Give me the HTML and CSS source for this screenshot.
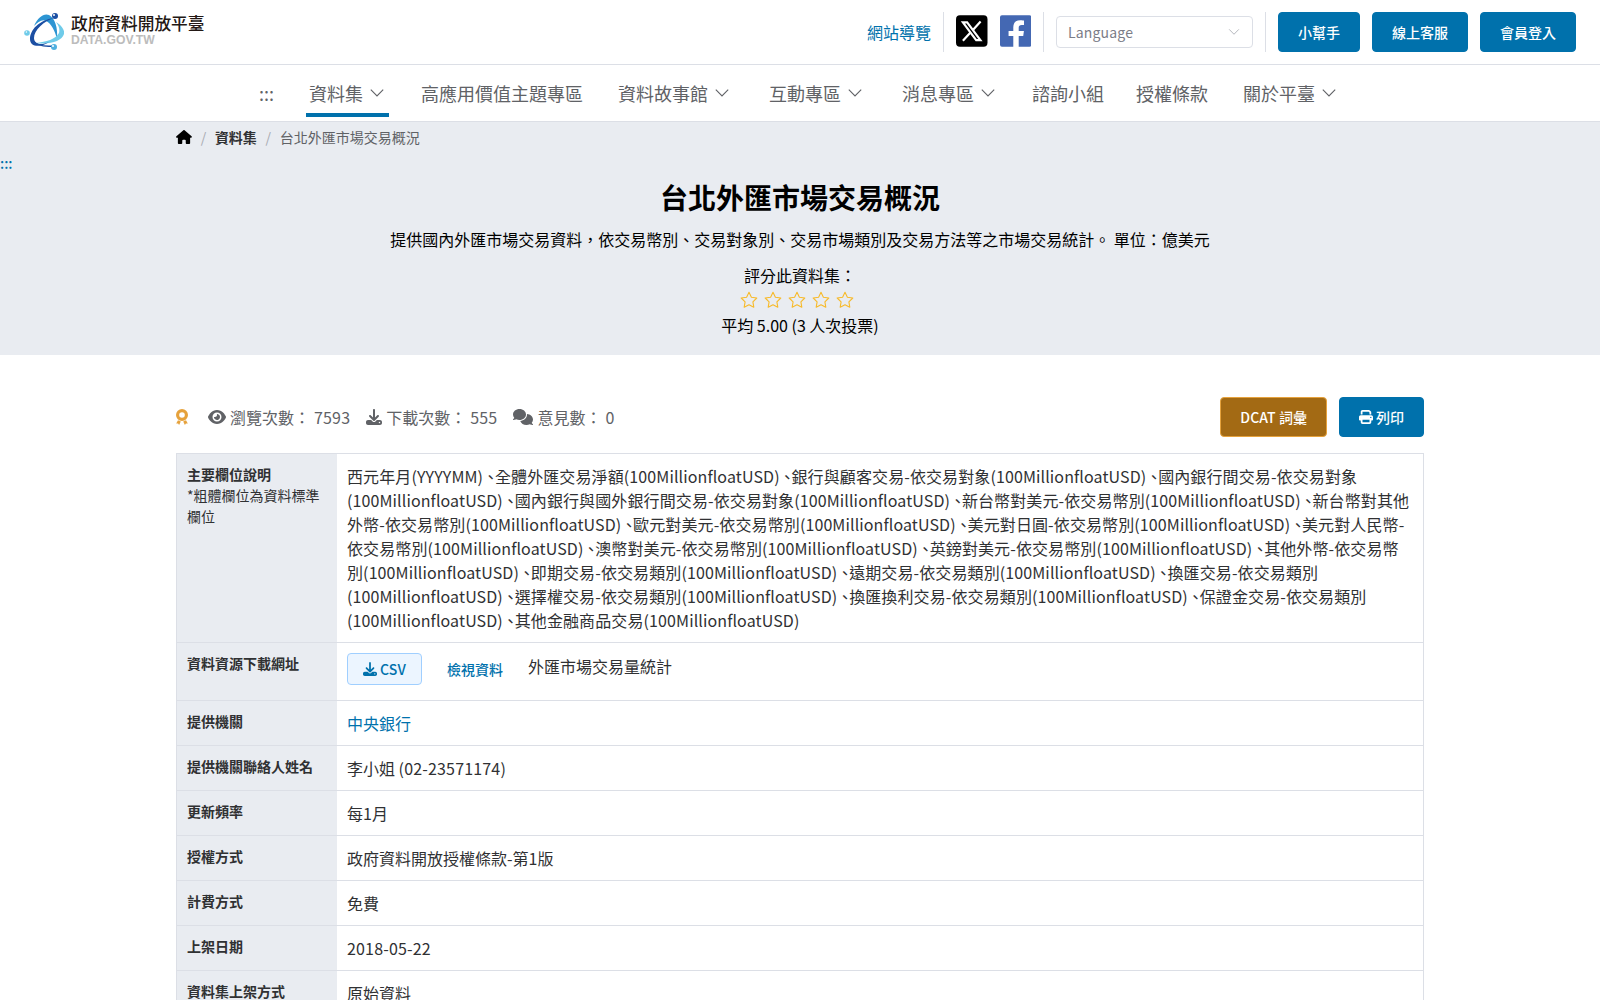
FILE: index.html
```html
<!DOCTYPE html>
<html lang="zh-Hant">
<head>
    <meta charset="UTF-8">
    <meta name="viewport" content="width=device-width, initial-scale=1.0">
    <title>台北外匯市場交易概況 | 政府資料開放平臺</title>
    <link rel="stylesheet" href="styles.css">
</head>
<body>
    <!-- shared icons -->
    <svg class="icon-defs" width="0" height="0">
        <symbol id="icon-down" viewBox="0 0 18 18"><path d="M2.8 5.6 9 11.900l6.200-6.300" fill="none" stroke="currentColor" stroke-width="1.1"/></symbol>
        <symbol id="icon-star" viewBox="0 0 18 18"><path d="M9 1.300l2.400 4.900 5.400.8-3.900 3.800.9 5.400L9 13.700l-4.800 2.500.9-5.400L1.200 7l5.400-.8z" fill="none" stroke="currentColor" stroke-width="1.1" stroke-linejoin="round"/></symbol>
        <symbol id="icon-download" viewBox="0 0 512 512"><path d="M288 32c0-17.700-14.300-32-32-32s-32 14.300-32 32V274.700l-73.400-73.400c-12.500-12.500-32.800-12.500-45.300 0s-12.500 32.800 0 45.300l128 128c12.500 12.500 32.800 12.500 45.300 0l128-128c12.500-12.500 12.500-32.800 0-45.300s-32.800-12.500-45.300 0L288 274.700V32zM64 352c-35.300 0-64 28.700-64 64v32c0 35.300 28.700 64 64 64H448c35.300 0 64-28.700 64-64V416c0-35.300-28.700-64-64-64H346.500l-45.300 45.300c-25 25-65.500 25-90.500 0L165.500 352H64zm368 56a24 24 0 1 1 0 48 24 24 0 1 1 0-48z"/></symbol>
    </svg>

    <header class="header">
        <a class="logo" href="#">
            <svg class="logo-mark" viewBox="0 0 40 38">
                <path d="M10 13C14 4 20 0 25 2c6 3 9 13 8 24-2-8-6-16-11-18-4-2-8 1-12 5z" fill="#2d95d3"/>
                <path d="M32 9c5 3 9 8 8 12-2 7-14 11-28 9 10-1 20-4 23-10 1-4 0-7-3-11z" fill="#6fcbe9"/>
                <path d="M30 5C20 8 10 17 10 25c0 6 7 8 15 4-9 6-19 5-19-3C6 17 15 7 30 5z" fill="#1c4fa3"/>
                <path d="M7 25c2 6 11 9 22 8" fill="none" stroke="#1c4fa3" stroke-width="1.500"/>
                <circle cx="31" cy="3" r="3" fill="#1c4fa3"/>
                <circle cx="3" cy="20" r="2.800" fill="#6fcbe9"/>
                <circle cx="30" cy="34" r="3" fill="#4fb0e0"/>
                <circle cx="30" cy="2" r="1" fill="#fff"/>
                <circle cx="2.400" cy="19" r=".8" fill="#fff"/>
                <circle cx="29" cy="33" r="1" fill="#fff"/>
            </svg>
            <span class="logo-text">
                <span class="logo-name">政府資料開放平臺</span>
                <span class="logo-domain">DATA.GOV.TW</span>
            </span>
        </a>
        <div class="tools">
            <a class="sitemap" href="#">網站導覽</a>
            <div class="socials">
                <a href="#"><svg class="social-icon" viewBox="0 0 32 32"><rect width="32" height="32" rx="4" fill="#000"/><path d="M7 7.200h4.300l13.500 18h-4.300z" fill="none" stroke="#fff" stroke-width="2.200"/><path d="M25 6.300l-7.600 8.500M14.700 17.600 7 26" fill="none" stroke="#fff" stroke-width="2.200"/></svg></a>
                <a href="#"><svg class="social-icon" viewBox="0 0 32 32"><path d="M2 0h28a2 2 0 0 1 2 2v28a2 2 0 0 1-2 2H19V21h4.600l.7-5H19v-3.500c0-1.800 1-2.700 3-2.700h2.400V5.400S22.700 5 20.500 5c-4.700 0-7 2.700-7 7.300V16H8.700v5h4.800v11H2a2 2 0 0 1-2-2V2a2 2 0 0 1 2-2z" fill="#4468b3"/></svg></a>
            </div>
            <div class="language">
                <span class="en">Language</span>
                <svg class="language-arrow"><use href="#icon-down"/></svg>
            </div>
            <div class="buttons">
                <button class="btn">小幫手</button>
                <button class="btn">線上客服</button>
                <button class="btn">會員登入</button>
            </div>
        </div>
    </header>

    <nav class="nav">
        <a class="nav-item" href="#">:::</a>
        <a class="nav-item submenu active" href="#">資料集<svg class="arrow"><use href="#icon-down"/></svg></a>
        <a class="nav-item" href="#">高應用價值主題專區</a>
        <a class="nav-item submenu" href="#">資料故事館<svg class="arrow"><use href="#icon-down"/></svg></a>
        <a class="nav-item submenu" href="#">互動專區<svg class="arrow"><use href="#icon-down"/></svg></a>
        <a class="nav-item submenu" href="#">消息專區<svg class="arrow"><use href="#icon-down"/></svg></a>
        <a class="nav-item" href="#">諮詢小組</a>
        <a class="nav-item" href="#">授權條款</a>
        <a class="nav-item submenu" href="#">關於平臺<svg class="arrow"><use href="#icon-down"/></svg></a>
    </nav>

    <section class="hero">
        <div class="container breadcrumb">
            <svg class="home" viewBox="0 0 576 512"><path d="M575.800 255.500c0 18-15 32.100-32 32.100h-32l.7 160.200c0 2.700-.2 5.400-.5 8.100V472c0 22.100-17.900 40-40 40H392c-22.100 0-40-17.900-40-40V384c0-17.700-14.300-32-32-32H256c-17.700 0-32 14.300-32 32v88c0 22.100-17.900 40-40 40H104c-22.100 0-40-17.900-40-40V287.600H32c-18 0-32-14-32-32.100 0-9 3-17 10-24L266.400 8c7-7 15-8 22-8s15 2 21 7L564.800 231.500c8 7 12 15 11 24z"/></svg>
            <span class="separator">/</span>
            <a class="crumb-link" href="#">資料集</a>
            <span class="separator">/</span>
            <span>台北外匯市場交易概況</span>
        </div>
        <a class="anchor" href="#">:::</a>
        <h1 class="title">台北外匯市場交易概況</h1>
        <p class="description">提供國內外匯市場交易資料，依交易幣別、交易對象別、交易市場類別及交易方法等之市場交易統計。 單位：億美元</p>
        <div class="rating">
            <div>評分此資料集：</div>
            <div class="stars">
                <svg class="star"><use href="#icon-star"/></svg>
                <svg class="star"><use href="#icon-star"/></svg>
                <svg class="star"><use href="#icon-star"/></svg>
                <svg class="star"><use href="#icon-star"/></svg>
                <svg class="star"><use href="#icon-star"/></svg>
            </div>
            <div>平均 5.00 (3 人次投票)</div>
        </div>
    </section>

    <main class="container">
        <div class="toolbar">
            <div class="stats">
                <svg class="medal" viewBox="0 0 12 16"><circle cx="6" cy="6" r="4.400" fill="none" stroke="currentColor" stroke-width="3.200"/><path d="M2 11.200.2 14.600l1.900-.1 1 1.500 1.700-3.600zM10 11.200l1.800 3.400-1.900-.1-1 1.500-1.700-3.600z" fill="currentColor"/></svg>
                <span class="stat"><svg width="18" height="16" viewBox="0 0 576 512"><path d="M288 32c-80.800 0-145.500 36.800-192.600 80.600C48.600 156 17.300 208 2.500 243.700c-3.300 7.900-3.300 16.700 0 24.600C17.300 304 48.600 356 95.400 399.400C142.500 443.200 207.200 480 288 480s145.500-36.800 192.600-80.600c46.800-43.500 78.100-95.400 93-131.100c3.300-7.900 3.300-16.700 0-24.600c-14.900-35.700-46.200-87.700-93-131.100C433.500 68.800 368.800 32 288 32zM144 256a144 144 0 1 1 288 0 144 144 0 1 1 -288 0zm144-64c0 35.300-28.700 64-64 64c-7.100 0-13.900-1.200-20.300-3.300c-5.500-1.800-11.900 1.600-11.700 7.400c.3 6.900 1.300 13.800 3.200 20.700c13.700 51.200 66.400 81.600 117.600 67.900s81.600-66.400 67.900-117.600c-11.100-41.500-47.800-69.400-88.600-71.100c-5.800-.2-9.200 6.100-7.400 11.700c2.100 6.400 3.300 13.200 3.300 20.300z"/></svg> 瀏覽次數： <span class="en">7593</span></span>
                <span class="stat"><svg width="16" height="16"><use href="#icon-download"/></svg> 下載次數： <span class="en">555</span></span>
                <span class="stat"><svg width="20" height="16" viewBox="0 0 640 512"><path d="M208 352c114.900 0 208-78.800 208-176S322.900 0 208 0S0 78.800 0 176c0 38.600 14.700 74.300 39.600 103.400c-3.500 9.400-8.700 17.700-14.200 24.700c-4.800 6.200-9.700 11-13.300 14.300c-1.800 1.600-3.300 2.900-4.300 3.700C1 327.200-1.400 334.400 .8 340.900S9.100 352 16 352c21.800 0 43.800-5.600 62.100-12.500c9.200-3.500 17.800-7.400 25.200-11.400C134.100 343.300 169.800 352 208 352zM448 176c0 112.300-99.100 196.900-216.500 207C255.800 457.400 336.400 512 432 512c38.200 0 73.900-8.700 104.700-23.900c7.500 4 16 7.900 25.200 11.400c18.300 6.900 40.300 12.500 62.100 12.500c6.900 0 13.100-4.500 15.200-11.100c2.100-6.600-.2-13.800-5.800-17.900c-1-.8-2.500-2-5.600-4.700c-3.600-3.300-8.500-8.100-13.300-14.300c-5.500-7-10.700-15.400-14.200-24.700c24.900-29 39.600-64.700 39.600-103.400c0-92.800-84.900-168.900-192.600-175.500c.4 5.100 .6 10.300 .6 15.500z"/></svg> 意見數： <span class="en">0</span></span>
            </div>
            <div class="buttons">
                <button class="btn btn-dcat">DCAT 詞彙</button>
                <button class="btn"><svg width="14" height="14" viewBox="0 0 512 512"><path d="M128 0C92.700 0 64 28.700 64 64v96h64V64H354.700L384 93.300V160h64V93.300c0-17-6.700-33.300-18.700-45.300L400 18.700C388 6.700 371.700 0 354.700 0H128zM384 352v32 64H128V384 368 352H384zm64 32h32c17.700 0 32-14.300 32-32V256c0-35.300-28.700-64-64-64H64c-35.300 0-64 28.700-64 64v96c0 17.700 14.300 32 32 32H64v64c0 35.300 28.700 64 64 64H384c35.300 0 64-28.700 64-64V384zM432 248a24 24 0 1 1 0 48 24 24 0 1 1 0-48z"/></svg>列印</button>
            </div>
        </div>

        <div class="table">
            <div class="row">
                <div class="label"><strong>主要欄位說明</strong><br>*粗體欄位為資料標準欄位</div>
                <div class="value fields">西元年月(YYYYMM) 、全體外匯交易淨額(100MillionfloatUSD) 、銀行與顧客交易-依交易對象(100MillionfloatUSD) 、國內銀行間交易-依交易對象(100MillionfloatUSD) 、國內銀行與國外銀行間交易-依交易對象(100MillionfloatUSD) 、新台幣對美元-依交易幣別(100MillionfloatUSD) 、新台幣對其他外幣-依交易幣別(100MillionfloatUSD) 、歐元對美元-依交易幣別(100MillionfloatUSD) 、美元對日圓-依交易幣別(100MillionfloatUSD) 、美元對人民幣-依交易幣別(100MillionfloatUSD) 、澳幣對美元-依交易幣別(100MillionfloatUSD) 、英鎊對美元-依交易幣別(100MillionfloatUSD) 、其他外幣-依交易幣別(100MillionfloatUSD) 、即期交易-依交易類別(100MillionfloatUSD) 、遠期交易-依交易類別(100MillionfloatUSD) 、換匯交易-依交易類別(100MillionfloatUSD) 、選擇權交易-依交易類別(100MillionfloatUSD) 、換匯換利交易-依交易類別(100MillionfloatUSD) 、保證金交易-依交易類別(100MillionfloatUSD) 、其他金融商品交易(100MillionfloatUSD)</div>
            </div>
            <div class="row">
                <div class="label"><strong>資料資源下載網址</strong></div>
                <div class="value resource">
                    <button class="btn-csv"><svg width="14" height="14"><use href="#icon-download"/></svg><span class="en">CSV</span></button>
                    <a class="view-link" href="#">檢視資料</a>
                    <span class="resource-name">外匯市場交易量統計</span>
                </div>
            </div>
            <div class="row">
                <div class="label"><strong>提供機關</strong></div>
                <div class="value"><a href="#">中央銀行</a></div>
            </div>
            <div class="row">
                <div class="label"><strong>提供機關聯絡人姓名</strong></div>
                <div class="value">李小姐 <span class="en">(02-23571174)</span></div>
            </div>
            <div class="row">
                <div class="label"><strong>更新頻率</strong></div>
                <div class="value">每1月</div>
            </div>
            <div class="row">
                <div class="label"><strong>授權方式</strong></div>
                <div class="value">政府資料開放授權條款-第1版</div>
            </div>
            <div class="row">
                <div class="label"><strong>計費方式</strong></div>
                <div class="value">免費</div>
            </div>
            <div class="row">
                <div class="label"><strong>上架日期</strong></div>
                <div class="value"><span class="en">2018-05-22</span></div>
            </div>
            <div class="row">
                <div class="label"><strong>資料集上架方式</strong></div>
                <div class="value">原始資料</div>
            </div>
        </div>
    </main>
</body>
</html>
```
FILE: styles.css
```css
* {
    box-sizing: border-box;
}
html {
    overflow: hidden;
}
body {
    margin: 0;
    height: 1000px;
    overflow: hidden;
    font-family: "Noto Sans CJK TC", sans-serif;
    font-size: 16px;
    line-height: 1.5;
    color: #303133;
    background: #fff;
}
a {
    color: #0071ac;
    text-decoration: none;
}
svg {
    fill: currentColor;
}
.icon-defs {
    position: absolute;
}
.container {
    width: 1248px;
    margin: 0 auto;
}
/* latin runs and numbers, a bit looser than the chinese text */
.en {
    letter-spacing: 0.17px;
}

/* top bar */
.header {
    display: flex;
    justify-content: space-between;
    align-items: center;
    height: 65px;
    padding: 0 24px;
    border-bottom: 1px solid #dcdfe6;
}
.logo {
    display: flex;
    align-items: center;
    gap: 7px;
}
.logo-mark {
    width: 40px;
    height: 38px;
}
.logo-text {
    display: flex;
    flex-direction: column;
    margin-top: -3px;
}
.logo-name {
    font-size: 16.7px;
    font-weight: 500;
    line-height: 18px;
    color: #231815;
}
.logo-domain {
    font: bold 12.2px/16px "Liberation Sans", Arial, sans-serif;
    color: #bcbcbc;
}
.tools {
    display: flex;
    align-items: center;
    height: 40px;
}
.sitemap {
    padding-right: 12px;
}
.socials {
    display: flex;
    align-items: center;
    gap: 12px;
    height: 40px;
    padding: 0 12px;
    border-left: 1px solid #dcdfe6;
    border-right: 1px solid #dcdfe6;
}
.social-icon {
    display: block;
    width: 31.5px;
    height: 32px;
    margin-top: -2px;
}
.language {
    display: flex;
    justify-content: space-between;
    align-items: center;
    width: 197px;
    height: 32px;
    margin: 0 12px;
    padding: 0 11px;
    border: 1px solid #dcdfe6;
    border-radius: 4px;
    font-size: 14px;
    color: #7b7d87;
}
.language-arrow {
    width: 14px;
    height: 14px;
    color: #a8abb2;
}
.buttons {
    display: flex;
    gap: 12px;
}
.tools .buttons {
    padding-left: 12px;
    border-left: 1px solid #dcdfe6;
}
.btn {
    display: flex;
    align-items: center;
    gap: 3px;
    height: 40px;
    padding: 0 19px;
    border: 1px solid #0071ac;
    border-radius: 4px;
    background: #0071ac;
    color: #fff;
    font: 500 14px "Noto Sans CJK TC", sans-serif;
}
.btn-dcat {
    border-color: #e6a23c;
    background: #a36a14;
    letter-spacing: 0.05px;
}

/* main menu */
.nav {
    display: flex;
    justify-content: center;
    gap: 32px;
    height: 57px;
    border-bottom: 1px solid #dcdfe6;
}
.nav-item {
    display: flex;
    align-items: center;
    height: 52px;
    padding-top: 8px;
    border-bottom: 4px solid transparent;
    font-size: 18px;
    color: #606266;
}
.submenu {
    padding-left: 3px;
    padding-right: 3px;
}
.active {
    border-bottom-color: #0071ac;
}
.arrow {
    width: 18px;
    height: 18px;
    margin-left: 5px;
}

/* dataset heading */
.hero {
    height: 233px;
    background: #e9ecf1;
    color: #000;
    text-align: center;
}
.breadcrumb {
    display: flex;
    align-items: center;
    height: 30px;
    font-size: 14px;
    color: #606266;
}
.home {
    width: 16px;
    height: 14px;
    color: #000;
}
.separator {
    margin: 0 8.7px;
    color: #a8abb2;
}
.crumb-link {
    font-weight: 700;
    color: #303133;
}
.anchor {
    display: block;
    height: 24px;
    padding-top: 1px;
    text-align: left;
    font-size: 14px;
    font-weight: 500;
}
.title {
    margin: 0;
    font-size: 28px;
    line-height: 42px;
}
.description {
    margin: 9px 0 12px;
}
.rating {
    line-height: 24px;
}
.stars {
    display: flex;
    justify-content: center;
    gap: 6px;
    height: 26px;
    padding-right: 6px;
    align-items: center;
}
.star {
    width: 18px;
    height: 18px;
    color: #f7ba2a;
}

/* counters and actions */
.toolbar {
    display: flex;
    justify-content: space-between;
    align-items: center;
    margin: 42px 0 16px;
}
.stats {
    display: flex;
    align-items: center;
    gap: 16px;
    color: #606266;
}
.medal {
    width: 12px;
    height: 16px;
    margin-right: 4px;
    color: #e6a23c;
}
.stat {
    display: flex;
    align-items: center;
    gap: 4px;
}

/* metadata */
.table {
    border: 1px solid #dcdfe6;
}
.row {
    display: flex;
    border-bottom: 1px solid #dcdfe6;
}
.label {
    flex: 0 0 160px;
    padding: 10px;
    background: #e9ecf1;
    font-size: 14px;
}
.value {
    flex: 1;
    padding: 10px;
}
/* half-width punctuation between field names */
.fields {
    font-feature-settings: "halt";
    letter-spacing: 0.11px;
}
.resource {
    display: flex;
    height: 57px;
}
.btn-csv {
    display: flex;
    align-items: center;
    gap: 3px;
    height: 32px;
    padding: 0 15px;
    border: 1px solid #a0cfff;
    border-radius: 4px;
    background: #ecf5ff;
    color: #0071ac;
    font: 500 14px "Noto Sans CJK TC", sans-serif;
}
.view-link {
    margin: 0 25px;
    font-size: 14px;
    font-weight: 500;
    line-height: 32px;
}
.resource-name {
    padding-top: 1px;
}
```
